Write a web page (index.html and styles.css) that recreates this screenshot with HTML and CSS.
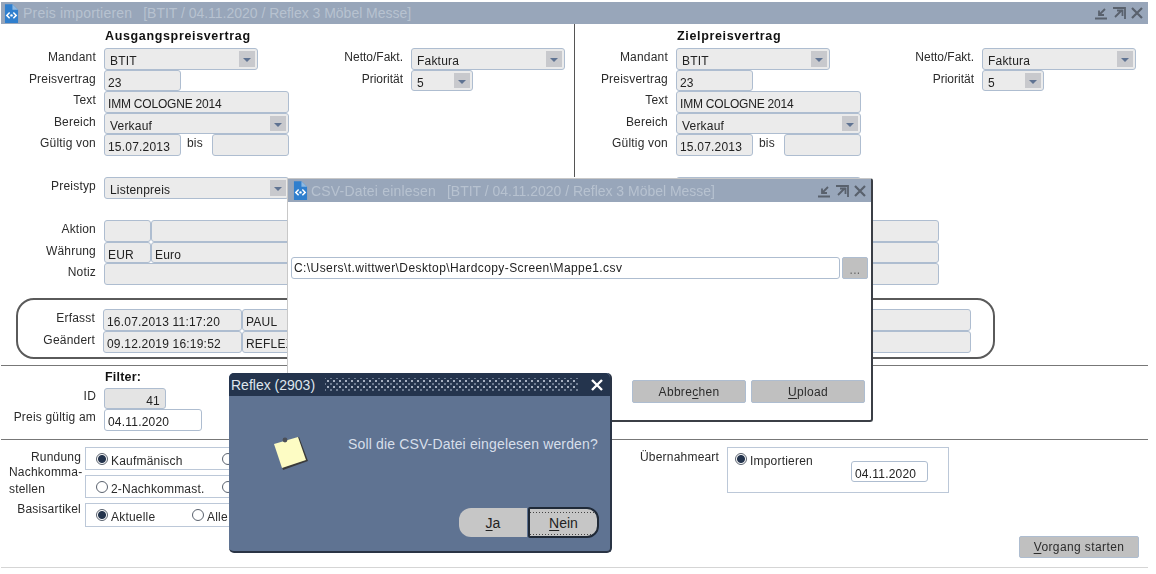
FILE: index.html
```html
<!DOCTYPE html>
<html lang="de">
  <head>
    <meta charset="UTF-8" />
    <title>Preis importieren</title>
    <link rel="stylesheet" href="styles.css">
  </head>
  <body>
    <svg class="defs" width="0" height="0">
      <symbol id="doc" viewBox="0 0 16 20">
        <path d="M1 0h8l6 6v14H1z" fill="#2f7fce" />
        <path d="M9 0l6 6H9z" fill="#8fb8df" />
        <path d="M6 9l-3 3 3 3M10 9l3 3-3 3" fill="none" stroke="#fff" stroke-width="1.6" />
        <circle cx="8" cy="12" r="1.3" fill="#fff" />
      </symbol>
      <symbol id="win-min" viewBox="0 0 14 14">
        <path d="M1 12.5h12M11 3L5 9M5 4.5V9h5" fill="none" stroke="#59616d" stroke-width="1.8" />
      </symbol>
      <symbol id="win-max" viewBox="0 0 14 14">
        <path d="M1 2h12v11M3 11l7-7M5 4.5h5.5V10" fill="none" stroke="#59616d" stroke-width="1.8" />
      </symbol>
      <symbol id="win-close" viewBox="0 0 14 14">
        <path d="M2 2l10 10M12 2L2 12" fill="none" stroke="#59616d" stroke-width="2.2" />
      </symbol>
    </svg>

    <div class="window">
      <div class="titlebar">
        <svg class="doc-icon"><use href="#doc" /></svg>
        <span class="title">Preis importieren</span>
        <span class="title title-info">[BTIT / 04.11.2020 / Reflex 3 Möbel Messe]</span>
        <div class="win-buttons">
          <svg><use href="#win-min" /></svg>
          <svg><use href="#win-max" /></svg>
          <svg><use href="#win-close" /></svg>
        </div>
      </div>

      <div class="panes">
        <div class="pane pane-source">
          <div class="pane-main">
            <div class="heading">Ausgangspreisvertrag</div>
            <div class="row"><label>Mandant</label><div class="field select w-154">BTIT<i></i></div></div>
            <div class="row"><label>Preisvertrag</label><div class="field w-77">23</div></div>
            <div class="row"><label>Text</label><div class="field w-185 tight">IMM COLOGNE 2014</div></div>
            <div class="row"><label>Bereich</label><div class="field select w-185">Verkauf<i></i></div></div>
            <div class="row"><label>Gültig von</label><div class="field w-77">15.07.2013</div><span class="bis">bis</span><div class="field w-77"></div></div>
          </div>
          <div class="pane-side">
            <div class="row"><label>Netto/Fakt.</label><div class="field select w-154">Faktura<i></i></div></div>
            <div class="row"><label>Priorität</label><div class="field select w-62">5<i></i></div></div>
          </div>
        </div>
        <div class="pane pane-target">
          <div class="pane-main">
            <div class="heading">Zielpreisvertrag</div>
            <div class="row"><label>Mandant</label><div class="field select w-154">BTIT<i></i></div></div>
            <div class="row"><label>Preisvertrag</label><div class="field w-77">23</div></div>
            <div class="row"><label>Text</label><div class="field w-185 tight">IMM COLOGNE 2014</div></div>
            <div class="row"><label>Bereich</label><div class="field select w-185">Verkauf<i></i></div></div>
            <div class="row"><label>Gültig von</label><div class="field w-77">15.07.2013</div><span class="bis">bis</span><div class="field w-77"></div></div>
          </div>
          <div class="pane-side">
            <div class="row"><label>Netto/Fakt.</label><div class="field select w-154">Faktura<i></i></div></div>
            <div class="row"><label>Priorität</label><div class="field select w-62">5<i></i></div></div>
          </div>
        </div>
      </div>

      <div class="price-type">
        <div class="row"><label>Preistyp</label><div class="field select w-185">Listenpreis<i></i></div></div>
        <div class="row row-target"><div class="field w-185"></div></div>
      </div>

      <div class="details">
        <div class="row"><label>Aktion</label><div class="field w-47"></div><div class="field w-788"></div></div>
        <div class="row"><label>Währung</label><div class="field w-47">EUR</div><div class="field w-788">Euro</div></div>
        <div class="row"><label>Notiz</label><div class="field w-835"></div></div>
      </div>

      <div class="audit">
        <div class="row"><label>Erfasst</label><div class="field w-139">16.07.2013 11:17:20</div><div class="field w-729">PAUL</div></div>
        <div class="row"><label>Geändert</label><div class="field w-139">09.12.2019 16:19:52</div><div class="field w-729">REFLEX</div></div>
      </div>

      <div class="filter">
        <div class="heading">Filter:</div>
        <div class="row"><label>ID</label><div class="field w-62 num">41</div></div>
        <div class="row"><label>Preis gültig am</label><div class="field field-edit w-98">04.11.2020</div></div>
      </div>

      <div class="options">
        <div class="option-list">
          <div class="option">
            <span class="option-label">Rundung</span>
            <div class="radio-box">
              <span class="radio on"></span><span class="radio-text w-radio">Kaufmänisch</span><span class="radio"></span>
            </div>
          </div>
          <div class="option">
            <span class="option-label option-multi">Nachkomma-<br />stellen</span>
            <div class="radio-box">
              <span class="radio"></span><span class="radio-text w-radio">2-Nachkommast.</span><span class="radio"></span>
            </div>
          </div>
          <div class="option option-last">
            <span class="option-label">Basisartikel</span>
            <div class="radio-box">
              <span class="radio on"></span><span class="radio-text w-aktuelle">Aktuelle</span><span class="radio"></span><span class="radio-text">Alle</span>
            </div>
          </div>
        </div>
        <div class="takeover">
          <span class="takeover-label">Übernahmeart</span>
          <div class="takeover-box">
            <span class="radio on"></span><span class="radio-text">Importieren</span>
            <div class="field field-edit takeover-date">04.11.2020</div>
          </div>
        </div>
      </div>

      <div class="footer">
        <button class="btn btn-start"><u>V</u>organg starten</button>
      </div>
    </div>

    <div class="csv-dialog">
      <div class="titlebar">
        <svg class="doc-icon"><use href="#doc" /></svg>
        <span class="title">CSV-Datei einlesen</span>
        <span class="title title-info">[BTIT / 04.11.2020 / Reflex 3 Möbel Messe]</span>
        <div class="win-buttons">
          <svg><use href="#win-min" /></svg>
          <svg><use href="#win-max" /></svg>
          <svg><use href="#win-close" /></svg>
        </div>
      </div>
      <div class="csv-path">
        <div class="field field-edit path-input">C:\Users\t.wittwer\Desktop\Hardcopy-Screen\Mappe1.csv</div>
        <button class="btn btn-browse">...</button>
      </div>
      <div class="csv-actions">
        <button class="btn">Abbre<u>c</u>hen</button>
        <button class="btn"><u>U</u>pload</button>
      </div>
    </div>

    <div class="alert">
      <div class="alert-title">
        <span>Reflex (2903)</span>
        <div class="alert-dots"></div>
        <svg class="alert-close" viewBox="0 0 14 14"><path d="M2 2l10 10M12 2L2 12" fill="none" stroke="#fff" stroke-width="2.4" /></svg>
      </div>
      <div class="alert-body">
        <svg class="note-icon" viewBox="0 0 38 38">
          <path d="M4 12L28 4l9 24-25 9z" fill="#3a3a3a" />
          <path d="M3 11L27 4l8 23-24 8z" fill="#fdfcc4" />
          <circle cx="14" cy="7" r="2.4" fill="#4b4f57" />
        </svg>
        <p>Soll die CSV-Datei eingelesen werden?</p>
      </div>
      <div class="alert-actions">
        <button class="alert-btn alert-yes"><u>J</u>a</button>
        <button class="alert-btn alert-no"><u>N</u>ein</button>
      </div>
    </div>
  </body>
</html>
```

FILE: styles.css
```css
/* General styles */
body {
  margin: 0;
  padding: 2px 8px 0 1px;
  background: #fff;
  color: #2b2b2b;
  font-family: "Liberation Sans", Arial, sans-serif;
  font-size: 12px;
  letter-spacing: 0.2px;
  height: 572px;
  overflow: hidden;
  position: relative;
  filter: blur(0.35px); /* the source picture is a soft, upscaled capture */
}

.defs {
  position: absolute;
}

u {
  text-underline-offset: 2px;
}

/* Title bars */
.titlebar {
  display: flex;
  align-items: center;
  height: 22px;
  background-color: #98a6ba;
}

.doc-icon {
  width: 15px;
  height: 19px;
  margin: 0 4px 0 3px;
  flex: none;
}

.title {
  color: #b7c2d0;
  font-size: 14px;
  letter-spacing: 0.2px;
  white-space: nowrap;
}

.title-info {
  margin-left: 11px;
  letter-spacing: -0.02px;
}

.win-buttons {
  display: flex;
  gap: 4px;
  margin-left: auto;
  padding-right: 4px;
}

.win-buttons svg {
  width: 14px;
  height: 14px;
}

/* Main window */
.window {
  width: 1147px;
}

.panes {
  display: flex;
  height: 153px;
}

.pane {
  display: flex;
}

.pane-source {
  width: 573px;
  border-right: 1px solid #555;
  --label-w: 95px;
}

.pane-target {
  --label-w: 93px;
}

.pane-source .pane-main {
  width: 288px;
}

.pane-target .pane-main {
  width: 286px;
}

.pane-side {
  margin-left: 34px;
  padding-top: 24px;
  --label-w: 80px;
}

.pane-side .row label {
  letter-spacing: 0;
}

.pane-target .pane-side {
  margin-left: 33px;
}

.heading {
  height: 24px;
  line-height: 25px;
  padding-left: 104px;
  font-size: 12.5px;
  font-weight: bold;
  letter-spacing: 0.65px;
  color: #111;
}

.pane-target .heading {
  padding-left: 102px;
}

.row {
  display: flex;
  height: 21.6px;
}

.row label {
  width: var(--label-w, 95px);
  margin-right: 8px;
  flex: none;
  line-height: 18px;
  text-align: right;
  white-space: nowrap;
}

/* Fields */
.field {
  position: relative;
  box-sizing: border-box;
  flex: none;
  height: 21.6px;
  padding: 4px 0 0 3px;
  background-color: #ebebeb;
  border: 1px solid #aebdd0;
  border-radius: 3px;
  color: #222;
  line-height: 16px;
  white-space: nowrap;
  overflow: hidden;
}

.field-edit {
  background-color: #fff;
}

.select {
  padding-left: 5px;
}

.select i {
  position: absolute;
  top: 2px;
  right: 2px;
  bottom: 2px;
  width: 16px;
  background-color: #c8c9cd;
}

.select i:after {
  content: "";
  position: absolute;
  left: 4px;
  top: 7px;
  border: 4px solid transparent;
  border-top: 4px solid #5f7392;
  border-bottom: 0;
}

.tight {
  letter-spacing: -0.2px;
  padding-left: 3px;
}

.num {
  text-align: right;
  padding-right: 5px;
  background-color: #e4e4e4;
}

.bis {
  width: 31px;
  padding-left: 6px;
  box-sizing: border-box;
  line-height: 18px;
}

.w-47 { width: 47px; }
.w-62 { width: 62px; }
.w-77 { width: 77px; }
.w-98 { width: 98px; }
.w-139 { width: 139px; }
.w-154 { width: 154px; }
.w-185 { width: 185px; }
.w-729 { width: 729px; }
.w-788 { width: 788px; }
.w-835 { width: 835px; }

/* Preistyp and the rows below it */
.price-type {
  display: flex;
}

.price-type .row:first-child {
  width: 675px;
}

.details {
  margin-top: 21.4px;
}

.audit {
  box-sizing: border-box;
  width: 979px;
  height: 61px;
  margin: 13px 0 0 15px;
  padding-top: 9px;
  border: 2px solid #5a5a5a;
  border-radius: 18px;
  --label-w: 77px;
}

.audit .field,
.audit .row {
  height: 22px;
}

.filter {
  margin-top: 6px;
  border-top: 1px solid #777;
  height: 73px;
}

.filter .heading {
  height: 22px;
  line-height: 22px;
  letter-spacing: 0.2px;
}

.filter .row label {
  line-height: 16px;
}

/* Options */
.options {
  display: flex;
  border-top: 1px solid #777;
  padding-top: 7px;
}

.option-list {
  width: 639px;
}

.option {
  display: flex;
  height: 23px;
  margin-bottom: 5px;
}

.option-last {
  height: 24px;
  margin-bottom: 0;
}

.option-label {
  box-sizing: border-box;
  width: 84px;
  padding-right: 4px;
  line-height: 20px;
  text-align: right;
}

.option-multi {
  padding: 0 0 0 8px;
  margin-top: -11px;
  line-height: 17px;
  text-align: left;
  white-space: nowrap;
}

.option-last .option-label {
  margin-top: -4px;
}

.radio-box {
  display: flex;
  align-items: flex-start;
  width: 260px;
  padding: 5px 0 0 10px;
  border: 1px solid #bcc8d8;
  border-right: 0;
}

.radio {
  box-sizing: border-box;
  flex: none;
  width: 12px;
  height: 12px;
  background-color: #fff;
  border: 1px solid #59616d;
  border-radius: 50%;
}

.radio.on {
  background: radial-gradient(circle, #24344d 3.5px, #fff 4.5px);
}

.radio-text {
  padding-left: 3px;
  line-height: 14px;
  margin-top: 1px;
}

.w-radio {
  width: 114px;
  box-sizing: border-box;
}

.w-aktuelle {
  width: 84px;
  box-sizing: border-box;
}

.takeover {
  display: flex;
}

.takeover-label {
  width: 79px;
  margin-right: 8px;
  line-height: 20px;
  text-align: right;
}

.takeover-box {
  position: relative;
  display: flex;
  align-items: flex-start;
  box-sizing: border-box;
  width: 222px;
  height: 46px;
  padding: 5px 0 0 7px;
  border: 1px solid #bcc8d8;
}

.takeover-date {
  position: absolute;
  left: 123px;
  top: 13px;
  width: 77px;
}

.footer {
  display: flex;
  justify-content: flex-end;
  padding: 9px 9px 9px 0;
  border-bottom: 1px solid #d5d5d5;
}

/* Buttons */
.btn {
  box-sizing: border-box;
  width: 114px;
  height: 23px;
  padding: 0;
  background-color: #c0c0c0;
  border: 1px solid #aebdd0;
  border-radius: 2px;
  color: #2b2b2b;
  font-family: inherit;
  font-size: 12px;
  letter-spacing: 0.3px;
}

.btn-start {
  width: 120px;
  height: 22px;
  letter-spacing: 0.4px;
}

/* CSV dialog */
.csv-dialog {
  position: absolute;
  left: 287px;
  top: 178px;
  box-sizing: border-box;
  width: 586px;
  height: 244px;
  background-color: #fff;
  border: 1px solid #c8c8c8;
  border-right: 2px solid #3b3f46;
  border-bottom: 2px solid #3b3f46;
  border-radius: 0 3px 3px 0;
}

.csv-dialog .titlebar {
  height: 23px;
}

.csv-dialog .doc-icon {
  margin-left: 5px;
  margin-right: 3px;
}

.csv-path {
  display: flex;
  gap: 2px;
  padding: 55px 0 0 3px;
}

.path-input {
  width: 549px;
  height: 22px;
  padding-left: 2px;
  padding-top: 2px;
  letter-spacing: 0.42px;
}

.btn-browse {
  width: 26px;
  height: 22px;
  line-height: 24px;
  color: #666;
}

.csv-actions {
  display: flex;
  justify-content: flex-end;
  gap: 5px;
  padding: 101px 6px 0 0;
}

/* Alert */
.alert {
  position: absolute;
  left: 229px;
  top: 373px;
  box-sizing: border-box;
  width: 383px;
  height: 180px;
  background-color: #5f7392;
  border-right: 2px solid #2a3445;
  border-bottom: 2px solid #2a3445;
  border-radius: 5px;
}

.alert-title {
  display: flex;
  align-items: center;
  height: 23px;
  padding: 0 6px 0 2px;
  background-color: #24344d;
  border-radius: 5px 5px 0 0;
  color: #dfe6ee;
  font-size: 14px;
  letter-spacing: 0;
}

.alert-dots {
  flex: 1;
  height: 14px;
  margin: 0 11px 0 10px;
  background-image:
    radial-gradient(circle, #aab4c4 0.7px, transparent 1px),
    radial-gradient(circle, #6f7d92 0.7px, transparent 1px);
  background-size: 6px 6px;
  background-position: 0 0, 3px 3px;
}

.alert-close {
  width: 14px;
  height: 14px;
}

.alert-body {
  position: relative;
  height: 111px;
}

.alert-body p {
  position: absolute;
  left: 119px;
  top: 40px;
  margin: 0;
  color: #d7dfea;
  font-size: 14px;
  letter-spacing: 0.15px;
  white-space: nowrap;
}

.note-icon {
  position: absolute;
  left: 42px;
  top: 37px;
  width: 38px;
  height: 38px;
}

.alert-actions {
  display: flex;
  align-items: center;
  padding-left: 230px;
  gap: 1px;
}

.alert-btn {
  box-sizing: border-box;
  height: 29px;
  padding: 0;
  background-color: #c6c6c6;
  border: 0;
  color: #222;
  font-family: inherit;
  font-size: 14px;
}

.alert-yes {
  width: 68px;
  border-radius: 12px 0 0 12px;
}

.alert-no {
  width: 71px;
  height: 31px;
  background-image:
    linear-gradient(90deg, #444 50%, transparent 50%),
    linear-gradient(90deg, #444 50%, transparent 50%);
  background-size: 3px 1px;
  background-repeat: repeat-x;
  background-position: 0 3px, 0 25px;
  border: 2px solid #1f2937;
  border-radius: 2px 12px 12px 2px;
}
```
